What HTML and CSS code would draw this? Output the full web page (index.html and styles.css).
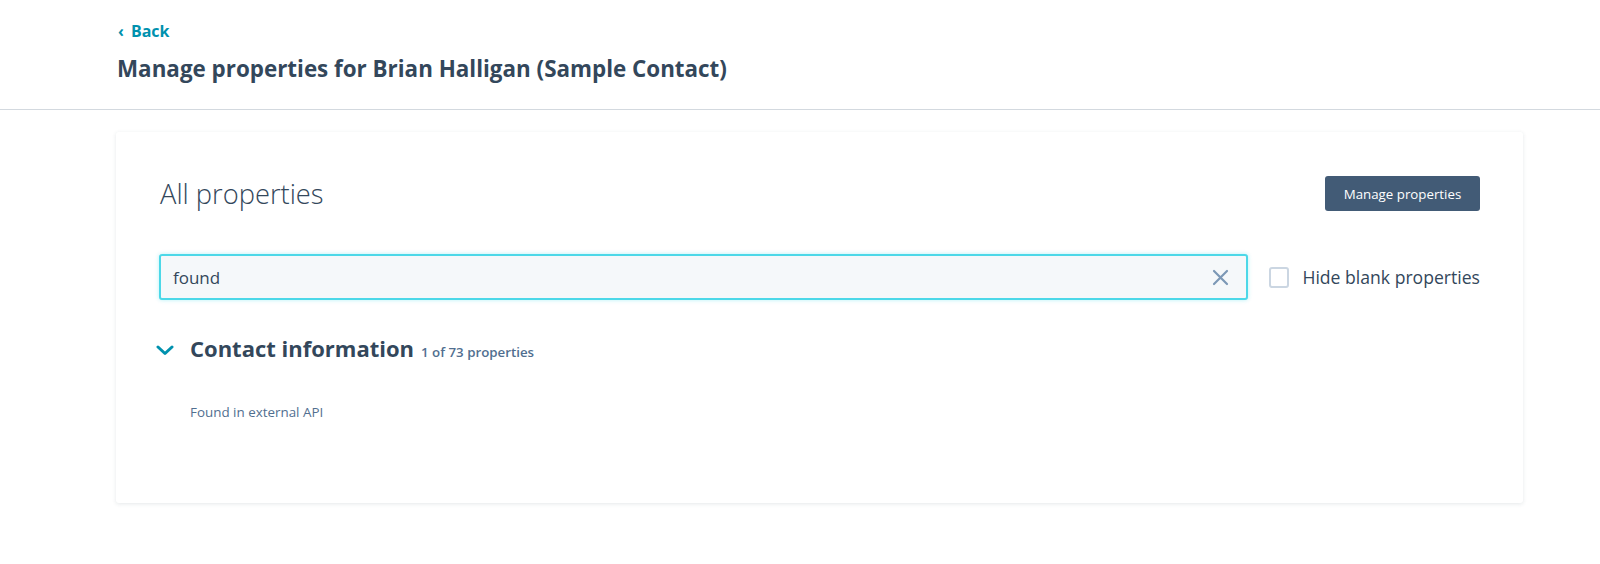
FILE: index.html
```html
<!DOCTYPE html>
<html>
<head>
<meta charset="utf-8">
<link rel="stylesheet" href="styles.css">
</head>
<body>
<header class="header">
  <a class="back" href="#"><span class="back-chev">‹</span> Back</a>
  <h1 class="title">Manage properties for Brian Halligan (Sample Contact)</h1>
</header>
<main class="main">
  <section class="card">
    <div class="card-head">
      <h2 class="card-title">All properties</h2>
      <button class="btn">Manage properties</button>
    </div>
    <div class="search-row">
      <div class="search">
        <span class="search-text">found</span>
        <svg class="clear" width="17" height="17" viewBox="0 0 17 17"><path d="M2 2 L15 15 M15 2 L2 15" stroke="#7c98b6" stroke-width="2.2" stroke-linecap="round" fill="none"/></svg>
      </div>
      <label class="check">
        <span class="box"></span>
        <span class="check-label">Hide blank properties</span>
      </label>
    </div>
    <div class="group">
      <svg class="chev" width="18" height="11" viewBox="0 0 18 11"><path d="M2 2 L9 8.5 L16 2" stroke="#0091ae" stroke-width="3" stroke-linecap="round" stroke-linejoin="round" fill="none"/></svg>
      <span class="group-title">Contact information</span>
      <span class="group-count">1 of 73 properties</span>
    </div>
    <div class="prop">Found in external API</div>
  </section>
</main>
</body>
</html>
```
FILE: styles.css
```css
* { box-sizing: border-box; }
body {
  margin: 0;
  font-family: "Open Sans", "Noto Sans", sans-serif;
  color: #33475b;
  background: #fff;
}
.header {
  padding: 20px 77px 0 118px;
  height: 110px;
  border-bottom: 1px solid #d3d9df;
}
.back {
  display: inline-flex;
  align-items: center;
  gap: 4px;
  color: #0091ae;
  font-weight: 700;
  font-size: 16px;
  text-decoration: none;
  line-height: 22px;
}
.back-chev { font-size: 16px; margin-right: 3px; }
.title {
  margin: 12px 0 0 -1px;
  font-size: 22.4px;
  font-weight: 700;
  line-height: 30px;
  color: #33475b;
}
.main {
  padding: 22px 77px 40px 116px;
}
.card {
  background: #fff;
  border-radius: 3px;
  box-shadow: 0 1px 4px rgba(45, 62, 80, 0.12);
  padding: 44px 43px 0 43px;
  height: 371px;
}
.card-head {
  display: flex;
  justify-content: space-between;
  align-items: center;
  height: 35px;
}
.card-title {
  margin: 0 0 0 1px;
  font-size: 27.3px;
  font-weight: 300;
  line-height: 36px;
  color: #33475b;
}
.btn {
  background: #425b76;
  color: #fff;
  border: none;
  border-radius: 3px;
  font-family: inherit;
  font-size: 13.3px;
  height: 35px;
  width: 155px;
}
.search-row {
  display: flex;
  align-items: center;
  gap: 21px;
  margin-top: 43px;
}
.search {
  flex: 1;
  height: 46px;
  background: #f5f8fa;
  border: 2px solid #4cd8e8;
  border-radius: 3px;
  box-shadow: 0 0 4px rgba(0, 208, 228, 0.3);
  display: flex;
  align-items: center;
  justify-content: space-between;
  padding: 0 17px 0 12px;
}
.search-text { font-size: 17px; color: #33475b; }
.clear { display: block; }
.check {
  display: flex;
  align-items: center;
  gap: 13px;
}
.box {
  width: 20px;
  height: 21px;
  border: 2px solid #cbd6e2;
  border-radius: 3px;
  background: #fff;
}
.check-label { font-size: 17.6px; color: #33475b; }
.group {
  display: flex;
  align-items: baseline;
  margin-top: 33px;
  line-height: 30px;
}
.chev { align-self: center; margin-left: -3px; margin-right: 16px; }
.group-title {
  font-size: 22px;
  font-weight: 700;
  color: #33475b;
}
.group-count {
  font-size: 13.3px;
  font-weight: 600;
  color: #516f90;
  margin-left: 7px;
}
.prop {
  margin-top: 36px;
  margin-left: 31px;
  font-size: 13.4px;
  line-height: 18px;
  color: #516f90;
}
```
